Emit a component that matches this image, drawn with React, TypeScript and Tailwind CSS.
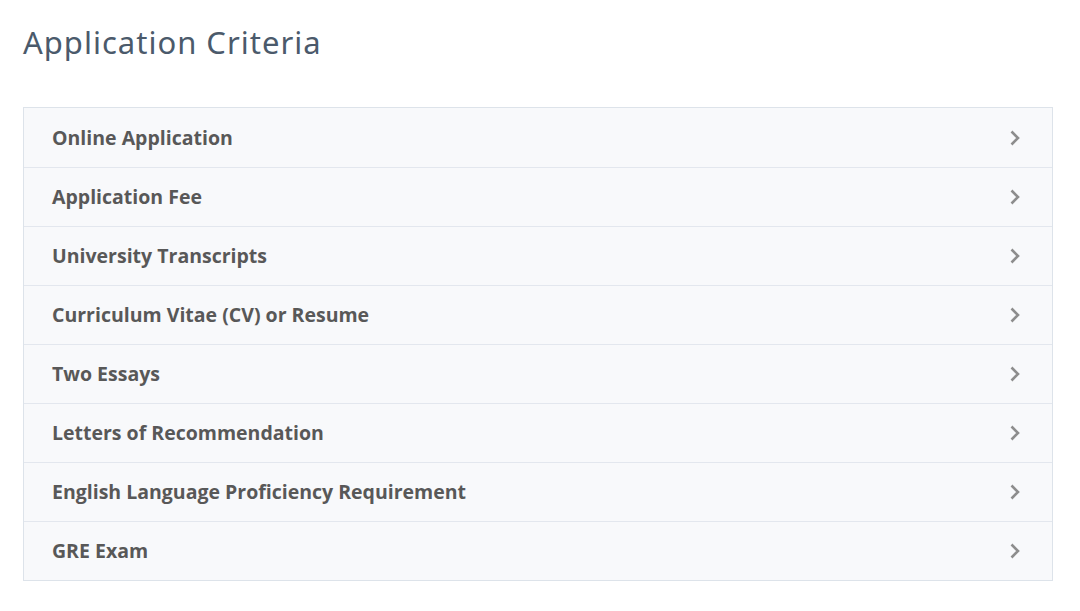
import React from "react";

const items = [
  "Online Application",
  "Application Fee",
  "University Transcripts",
  "Curriculum Vitae (CV) or Resume",
  "Two Essays",
  "Letters of Recommendation",
  "English Language Proficiency Requirement",
  "GRE Exam",
];

function Chevron() {
  return (
    <svg width="14" height="18" viewBox="0 0 14 18" fill="none" className="shrink-0">
      <path d="M3.5 2.5 L10 9 L3.5 15.5" stroke="#8d8d8d" strokeWidth="2.6" strokeLinecap="butt" strokeLinejoin="miter" />
    </svg>
  );
}

export default function App() {
  return (
    <div className="w-[1080px] h-[611px] bg-white px-[23px] pt-[22px]">
      <h1 className="text-[31px] leading-[40px] text-[#4b5a6b] font-normal tracking-[1px]" style={{ fontFamily: '"Noto Sans", sans-serif' }}>
        Application Criteria
      </h1>
      <div className="mt-[45px] w-[1030px] border border-[#dde3ea] bg-[#f8f9fb]">
        {items.map((t, i) => (
          <div
            key={t}
            className={`flex items-center justify-between h-[59px] pl-[28px] pr-[30px] ${i > 0 ? "border-t border-[#e3e7ee]" : ""}`}
          >
            <span className="text-[19.5px] font-bold text-[#585858]" style={{ fontFamily: '"Open Sans", sans-serif' }}>
              {t}
            </span>
            <Chevron />
          </div>
        ))}
      </div>
    </div>
  );
}
